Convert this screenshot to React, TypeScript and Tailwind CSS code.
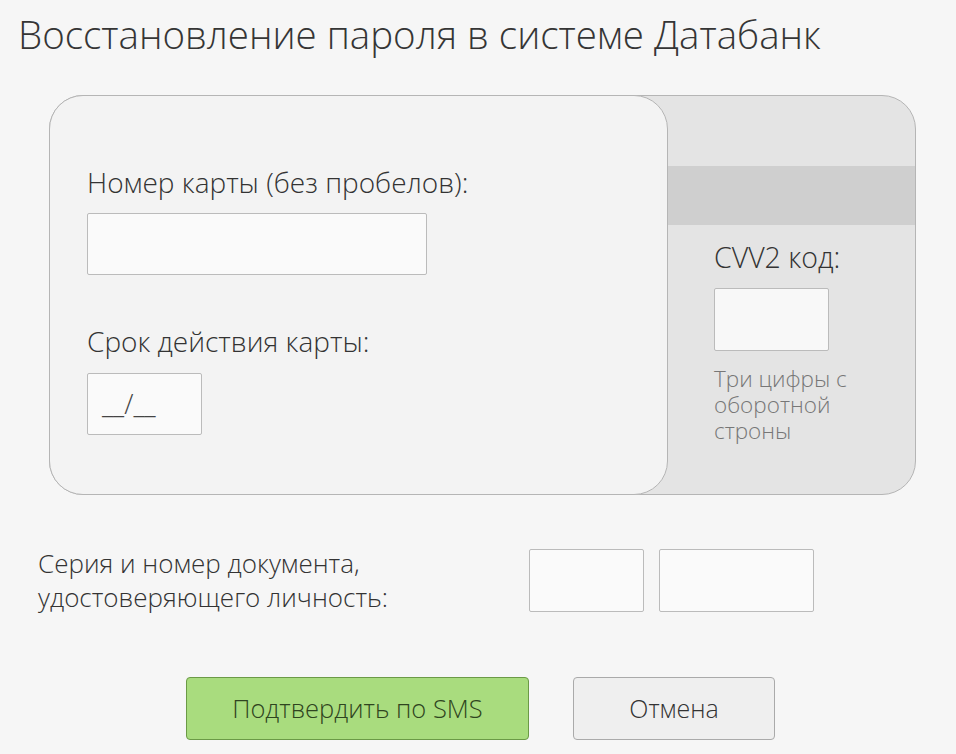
export default function App() {
  const font = { fontFamily: '"Open Sans", "Noto Sans", sans-serif' };
  return (
    <div className="min-h-screen w-[956px] h-[754px] overflow-hidden bg-[#f6f6f6] text-[#333] font-light" style={font}>
      <h1 className="pl-[18px] pt-[8px] text-[38.5px] leading-[52px] font-light text-[#353535]">
        Восстановление пароля в системе Датабанк
      </h1>

      <div className="ml-[49px] mt-[35px] flex h-[400px] w-[867px] rounded-[34px] border border-[#b5b5b5] bg-[#e4e4e4]">
        <div className="-my-px -ml-px h-[400px] w-[619px] shrink-0 rounded-[34px] border border-[#b5b5b5] bg-[#f3f3f3] pl-[37px] pt-[69px]">
          <div className="text-[28px] leading-[35px]">Номер карты (без пробелов):</div>
          <div className="mt-[13px] h-[62px] w-[340px] rounded-[2px] border border-[#bbb] bg-[#fafafa]" />
          <div className="mt-[49px] text-[28px] leading-[35px]">Срок действия карты:</div>
          <div className="mt-[14px] flex h-[62px] w-[115px] items-center rounded-[2px] border border-[#bbb] bg-[#fafafa] pl-[14px] text-[27px] text-[#444]">
            __/__
          </div>
        </div>
        <div className="flex-1 pt-[70px]">
          <div className="h-[59px] bg-[#cfcfcf]" />
          <div className="pl-[46px] pt-[15px]">
            <div className="text-[28.5px] leading-[35px]">CVV2 код:</div>
            <div className="mt-[13px] h-[63px] w-[115px] rounded-[2px] border border-[#bbb] bg-[#f8f8f8]" />
            <div className="mt-[15px] w-[160px] text-[22.5px] leading-[26px] text-[#777]">
              Три цифры с оборотной строны
            </div>
          </div>
        </div>
      </div>

      <div className="mt-[51px] flex items-center pl-[38px]">
        <div className="w-[491px] text-[26px] leading-[34px]">
          Серия и номер документа,
          <br />
          удостоверяющего личность:
        </div>
        <div className="flex gap-[15px]">
          <div className="h-[63px] w-[115px] rounded-[2px] border border-[#bbb] bg-[#fafafa]" />
          <div className="h-[63px] w-[155px] rounded-[2px] border border-[#bbb] bg-[#fafafa]" />
        </div>
      </div>

      <div className="mt-[63px] flex pl-[186px] gap-[44px]">
        <button className="h-[63px] w-[343px] rounded-[4px] border border-[#6b9a46] bg-[#a9dc7e] text-[25.5px] font-light text-[#2f4420]">
          Подтвердить по SMS
        </button>
        <button className="h-[63px] w-[202px] rounded-[4px] border border-[#aaa] bg-[#efefef] text-[25px] font-light text-[#333]">
          Отмена
        </button>
      </div>
    </div>
  );
}
